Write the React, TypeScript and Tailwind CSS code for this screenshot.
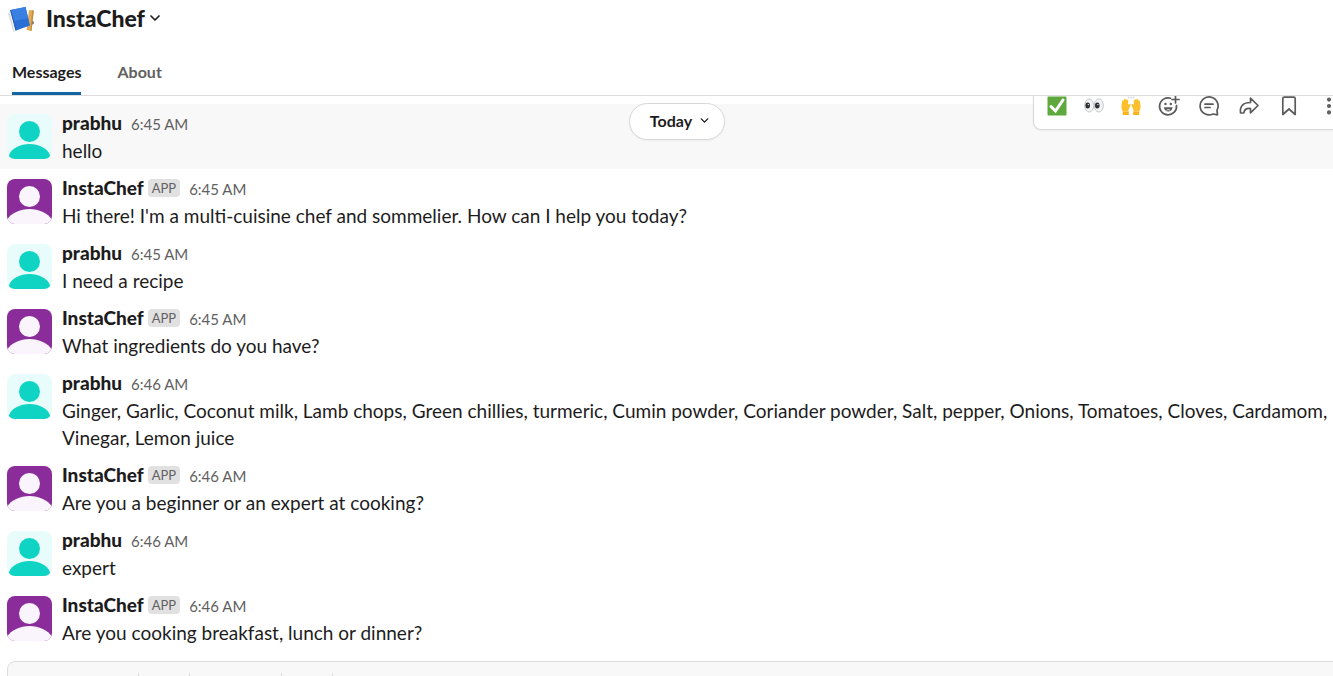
import { ChevronDown, EllipsisVertical } from 'lucide-react';

type Message = {
  author: string;
  time: string;
  text: string;
  isApp?: boolean;
};

const messages: Message[] = [
  { author: 'prabhu', time: '6:45 AM', text: 'hello' },
  {
    author: 'InstaChef',
    time: '6:45 AM',
    text: "Hi there! I'm a multi-cuisine chef and sommelier. How can I help you today?",
    isApp: true,
  },
  { author: 'prabhu', time: '6:45 AM', text: 'I need a recipe' },
  { author: 'InstaChef', time: '6:45 AM', text: 'What ingredients do you have?', isApp: true },
  {
    author: 'prabhu',
    time: '6:46 AM',
    text: 'Ginger, Garlic, Coconut milk, Lamb chops, Green chillies, turmeric, Cumin powder, Coriander powder, Salt, pepper, Onions, Tomatoes, Cloves, Cardamom, Vinegar, Lemon juice',
  },
  {
    author: 'InstaChef',
    time: '6:46 AM',
    text: 'Are you a beginner or an expert at cooking?',
    isApp: true,
  },
  { author: 'prabhu', time: '6:46 AM', text: 'expert' },
  {
    author: 'InstaChef',
    time: '6:46 AM',
    text: 'Are you cooking breakfast, lunch or dinner?',
    isApp: true,
  },
];

function AppLogo() {
  return (
    <svg viewBox="0 0 28 28" className="h-7 w-7 shrink-0" aria-hidden="true">
      <path d="M0 9l3-2 5 20-2.500.8z" fill="#cfd4dc" />
      <path d="M1.200 8.500L3 7l4.500 20-1.300.3z" fill="#f3f4f7" />
      <path d="M21 6l4.800.4L23.500 27l-5-1z" fill="#e0aa57" />
      <path d="M24.300 6.200l1.500.2L23.500 27l-1.200-.3z" fill="#c48f3c" />
      <path d="M24.800 17l1 1-.5 2-1 .5z" fill="#3c3c3c" />
      <path d="M2.500 6L17.500 3 22 21.500 8 26.500z" fill="#2a6fd6" />
      <path d="M2.500 6L17.500 3l2.700 11L5.500 17z" fill="#3a80e2" />
      <path d="M2.500 6L8 26.500" stroke="#1b55ad" strokeWidth="1" />
    </svg>
  );
}

function Avatar({ isApp }: { isApp?: boolean }) {
  const background = isApp ? '#8a2d9b' : '#e8fdfb';
  const figure = isApp ? '#faf4fc' : '#0fd4c4';
  return (
    <svg viewBox="0 0 45 45" className="mt-[5px] h-[45px] w-[45px] shrink-0 rounded-lg" aria-hidden="true">
      <rect width="45" height="45" fill={background} />
      <circle cx="22.500" cy="17.500" r="10.500" fill={figure} />
      {isApp ? (
        <path d="M0 45v-4C4 34 13 30 22.500 30S41 34 45 41v4z" fill={figure} />
      ) : (
        <path d="M2 41C5 34 13 30 22.500 30S40 34 43 41c0 2-1 4-4 4H6c-3 0-4-2-4-4z" fill={figure} />
      )}
    </svg>
  );
}

function MessageRow({ message, active }: { message: Message; active: boolean }) {
  return (
    <li className={active ? 'flex gap-2.5 bg-[#f8f8f8] py-[5px] pl-[7px]' : 'flex gap-2.5 py-[5px] pl-[7px]'}>
      <Avatar isApp={message.isApp} />
      <div className="min-w-0">
        <div className="flex h-7 items-baseline leading-7">
          <span className="text-[19px] font-black">{message.author}</span>
          {message.isApp && (
            <span className="ml-1 self-center rounded-sm bg-[#e1e1e1] px-1 text-[13px] leading-[18px] text-[#616061]">
              APP
            </span>
          )}
          <time className="ml-[9px] text-[15px] text-[#616061]">{message.time}</time>
        </div>
        <p className="text-[19px] leading-[27px]">{message.text}</p>
      </div>
    </li>
  );
}

function CheckEmoji() {
  return (
    <svg viewBox="0 0 20 20" className="h-5 w-5" aria-hidden="true">
      <rect x=".5" y=".5" width="19" height="19" rx="1" fill="#5fa83d" />
      <path d="M4 10.500l4.500 4.500 7.500-11" fill="none" stroke="#fff" strokeWidth="3" strokeLinecap="round" />
    </svg>
  );
}

function EyesEmoji() {
  return (
    <svg viewBox="0 0 20 20" className="h-5 w-5" aria-hidden="true">
      <ellipse cx="5.200" cy="9.500" rx="4.500" ry="6.500" fill="#f4f4f4" stroke="#c4c8cb" />
      <ellipse cx="14.800" cy="9.500" rx="4.500" ry="6.500" fill="#f4f4f4" stroke="#c4c8cb" />
      <ellipse cx="3.700" cy="9.500" rx="2.300" ry="3" fill="#2b2f33" />
      <ellipse cx="13.300" cy="9.500" rx="2.300" ry="3" fill="#2b2f33" />
      <circle cx="4.300" cy="8.600" r=".7" fill="#fff" />
      <circle cx="13.900" cy="8.600" r=".7" fill="#fff" />
    </svg>
  );
}

function HandsEmoji() {
  return (
    <svg viewBox="0 0 20 20" className="h-5 w-5" aria-hidden="true">
      <path
        id="hand"
        d="M2 15.500C.8 14 .3 12 .5 9.500L1.200 5c.3-1 1.400-.9 1.400.1L3 3.500c.3-1 1.500-.8 1.500.2.5-.9 1.600-.6 1.500.4.6-.6 1.400-.2 1.300.7L7 9l1.200-.9c1-.6 1.700.3 1.300 1.200L7.500 14v1.500z"
        fill="#fdc02a"
      />
      <use href="#hand" transform="translate(20 0) scale(-1 1)" />
      <path d="M1.800 15.500h6V19h-6zM12.200 15.500h6V19h-6z" fill="#f9b219" />
      <path d="M10 .5v2.300M7 .5l1 2M13 .5l-1 2" stroke="#b9c8d0" strokeWidth=".8" />
    </svg>
  );
}

function ReactionIcon() {
  return (
    <svg viewBox="0 0 22 22" className="h-[22px] w-[22px]" fill="none" stroke="currentColor" strokeWidth="1.700" aria-hidden="true">
      <path d="M12.500 3.200A8.500 8.500 0 1 0 18.500 10.500" strokeLinecap="round" />
      <path d="M17.500 1v7M14 4.500h7" strokeLinecap="round" />
      <path d="M5.800 12.300h8.900c-.4 2.800-2.200 4.200-4.400 4.200s-4-1.400-4.500-4.200z" fill="currentColor" stroke="none" />
      <path d="M8.500 15.200c1-.7 2.600-.7 3.600 0" stroke="#fff" strokeWidth="1" />
      <circle cx="7.500" cy="9" r="1.200" fill="currentColor" stroke="none" />
      <circle cx="12.800" cy="9" r="1.200" fill="currentColor" stroke="none" />
    </svg>
  );
}

function ThreadIcon() {
  return (
    <svg viewBox="0 0 22 22" className="h-[22px] w-[22px]" fill="none" stroke="currentColor" strokeWidth="1.700" strokeLinejoin="round" strokeLinecap="round" aria-hidden="true">
      <path d="M19.500 19.800L15 19A9 9 0 1 1 19 15.200z" />
      <path d="M7 9.200h8M7 12.500h5" />
    </svg>
  );
}

function ForwardIcon() {
  return (
    <svg viewBox="0 0 22 22" className="h-[22px] w-[22px]" fill="none" stroke="currentColor" strokeWidth="1.700" strokeLinejoin="round" aria-hidden="true">
      <path d="M12.500 3.200l7.500 7.300-7.500 7.300v-4.300c-4-.4-6.200.6-6.700 4.500H2.500C1.500 11 5.500 7.500 12.500 7.500z" />
    </svg>
  );
}

function BookmarkIcon() {
  return (
    <svg viewBox="0 0 22 22" className="h-[22px] w-[22px]" fill="none" stroke="currentColor" strokeWidth="1.700" strokeLinejoin="round" aria-hidden="true">
      <path d="M4.800 19.500V3.700c0-.9.600-1.500 1.500-1.500h9.400c.9 0 1.500.6 1.500 1.500v15.800L11 14z" />
    </svg>
  );
}

const emojiActions = [
  { label: 'Completed', icon: <CheckEmoji /> },
  { label: 'Taking a look', icon: <EyesEmoji /> },
  { label: 'Nicely done', icon: <HandsEmoji /> },
];

const actions = [
  { label: 'Add reaction', icon: <ReactionIcon /> },
  { label: 'Reply in thread', icon: <ThreadIcon /> },
  { label: 'Forward message', icon: <ForwardIcon /> },
  { label: 'Save for later', icon: <BookmarkIcon /> },
  { label: 'More actions', icon: <EllipsisVertical size={22} strokeWidth={2.5} /> },
];

export default function App() {
  return (
    <div className="flex h-screen flex-col overflow-hidden bg-white font-['Lato',sans-serif] text-[#1d1c1d]">
      <header className="border-b border-[#dddddd]">
        <button type="button" className="flex h-9 items-center gap-2.5 pl-2">
          <AppLogo />
          <h1 className="flex items-center gap-0.5 text-[23px] font-black">
            InstaChef
            <ChevronDown size={16} strokeWidth={2.5} />
          </h1>
        </button>
        <nav className="mt-3.5 flex gap-9 pl-3 text-[16px] font-bold">
          <a href="#messages" className="h-[45px] border-b-3 border-[#1264a3] leading-[43px]">
            Messages
          </a>
          <a href="#about" className="h-[45px] leading-[43px] text-[#616061]">
            About
          </a>
        </nav>
      </header>

      <main className="relative shrink-0 overflow-hidden pt-2 pb-2.5">
        <ul>
          {messages.map((message, index) => (
            <MessageRow key={index} message={message} active={index === 0} />
          ))}
        </ul>

        <button
          type="button"
          className="absolute inset-x-0 top-[7px] mx-auto flex h-[37px] w-24 translate-x-2.5 items-center justify-center gap-1.5 rounded-full border border-[#d8d8d8] bg-white pb-0.5 pl-2 text-[16px] font-bold shadow-xs"
        >
          Today
          <ChevronDown size={13} strokeWidth={2.5} />
        </button>

        <div className="absolute -top-4 -right-6 flex h-[50px] items-center rounded-lg border border-[#d8d8d8] bg-white pt-0.5 pr-[7px] pl-1 text-[#5c5b5c] shadow-xs">
          {emojiActions.map(({ label, icon }) => (
            <button key={label} type="button" aria-label={label} className="flex w-[37px] justify-center">
              {icon}
            </button>
          ))}
          {actions.map(({ label, icon }) => (
            <button key={label} type="button" aria-label={label} className="flex w-10 justify-center">
              {icon}
            </button>
          ))}
        </div>
      </main>

      <footer className="-mr-4 ml-[7px] h-[60px] shrink-0 rounded-lg border border-[#dddddd] bg-[#f8f8f8] pt-[11px]">
        <div className="flex h-6 text-[#dddddd]">
          <span className="ml-[130px] border-l" />
          <span className="ml-[50px] border-l" />
          <span className="ml-[91px] border-l" />
          <span className="ml-[50px] border-l" />
        </div>
      </footer>
    </div>
  );
}
